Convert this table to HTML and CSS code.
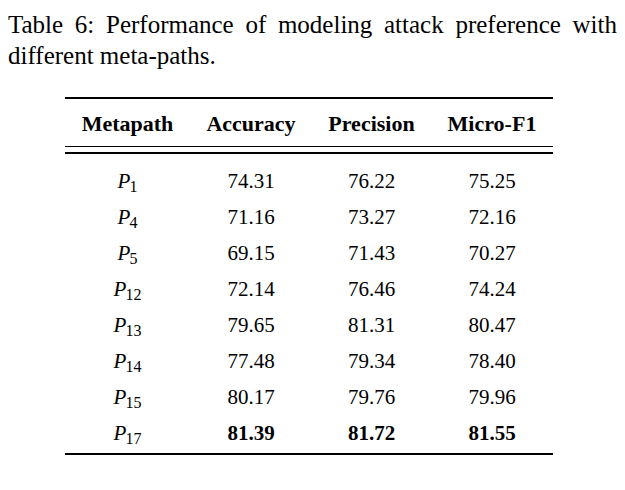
FILE: index.html
```html
<!DOCTYPE html>
<html>
<head>
<meta charset="utf-8">
<link rel="stylesheet" href="styles.css">
</head>
<body>
<p class="caption">Table 6: Performance of modeling attack preference with different meta-paths.</p>
<div class="table">
  <div class="rule rule-top"></div>
  <div class="row head">
    <div>Metapath</div><div>Accuracy</div><div>Precision</div><div>Micro-F1</div>
  </div>
  <div class="rule rule-thin"></div>
  <div class="rule rule-thick"></div>
  <div class="body">
    <div class="row"><div><i>P</i><sub>1</sub></div><div>74.31</div><div>76.22</div><div>75.25</div></div>
    <div class="row"><div><i>P</i><sub>4</sub></div><div>71.16</div><div>73.27</div><div>72.16</div></div>
    <div class="row"><div><i>P</i><sub>5</sub></div><div>69.15</div><div>71.43</div><div>70.27</div></div>
    <div class="row"><div><i>P</i><sub>12</sub></div><div>72.14</div><div>76.46</div><div>74.24</div></div>
    <div class="row"><div><i>P</i><sub>13</sub></div><div>79.65</div><div>81.31</div><div>80.47</div></div>
    <div class="row"><div><i>P</i><sub>14</sub></div><div>77.48</div><div>79.34</div><div>78.40</div></div>
    <div class="row"><div><i>P</i><sub>15</sub></div><div>80.17</div><div>79.76</div><div>79.96</div></div>
    <div class="row best"><div><i>P</i><sub>17</sub></div><div>81.39</div><div>81.72</div><div>81.55</div></div>
  </div>
  <div class="rule rule-bottom"></div>
</div>
</body>
</html>
```

FILE: styles.css
```css
html, body {
  margin: 0;
  padding: 0;
  background: #fff;
}
body {
  padding: 8px;
  font-family: "Liberation Serif", "Times New Roman", serif;
  color: #000;
}
.caption {
  margin: 1px 0 0 0;
  width: 609px;
  font-size: 25px;
  line-height: 31px;
  text-align: justify;
}
.table {
  margin: 26px 0 0 57px;
  width: 488px;
  font-size: 21px;
}
.rule {
  background: #000;
}
.rule-top {
  height: 1.5px;
}
.rule-thin {
  height: 1px;
}
.rule-thick {
  height: 2px;
  margin-top: 5px;
}
.rule-bottom {
  height: 1.5px;
  margin-top: 2px;
}
.row {
  display: grid;
  grid-template-columns: 125px 122px 119px 122px;
  height: 36px;
  align-items: center;
  text-align: center;
  line-height: 24px;
}
.row.head {
  height: 47.5px;
  padding-top: 3px;
  box-sizing: border-box;
  font-size: 22px;
  font-weight: bold;
}
.body {
  padding-top: 9px;
}
.row i {
  font-style: italic;
}
.row sub {
  font-size: 16px;
  line-height: 0;
  vertical-align: -4px;
  margin-left: -1px;
}
.best div + div {
  font-weight: bold;
}
```
